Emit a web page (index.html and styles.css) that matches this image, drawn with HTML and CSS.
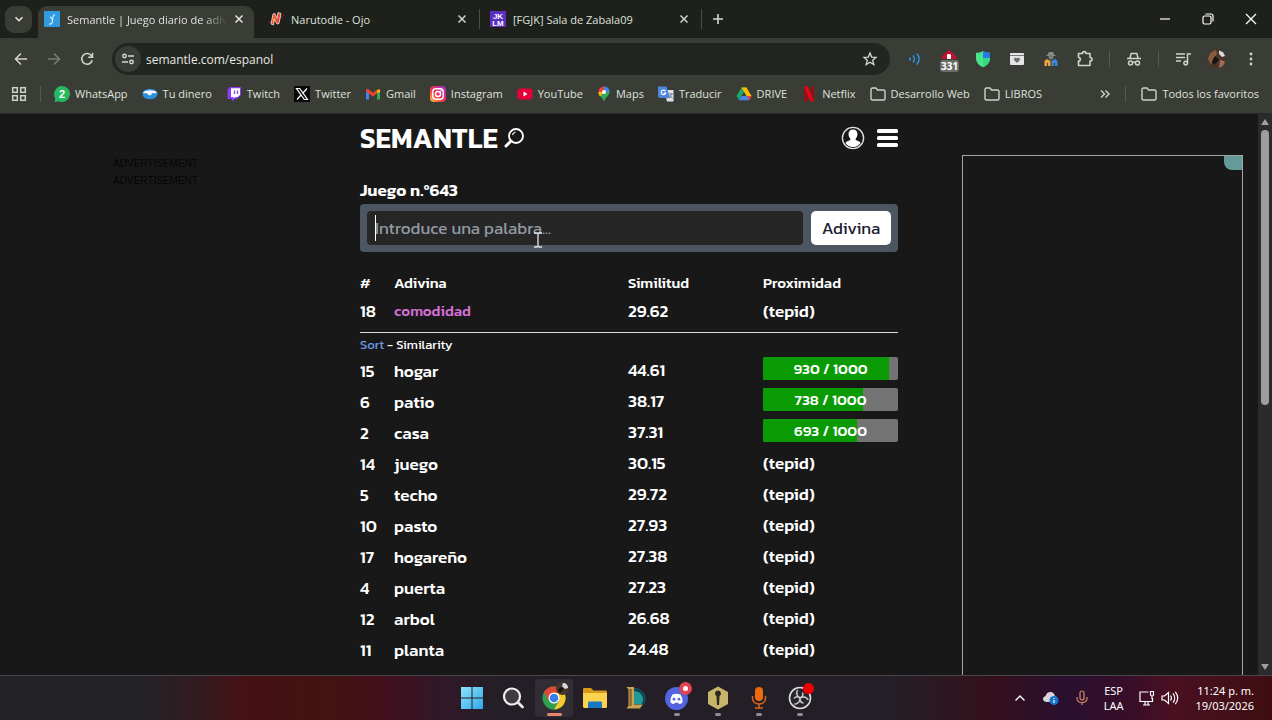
FILE: index.html
```
<!DOCTYPE html>
<html lang="es">
<head>
    <meta charset="UTF-8">
    <meta name="viewport" content="width=device-width, initial-scale=1.0">
    <title>Semantle | Juego diario de adivinanzas</title>
    <link rel="stylesheet" href="styles.css">
</head>
<body>
    <header class="browser">
        <!-- tabs -->
        <div class="tabstrip">
            <button class="tab-search" aria-label="Buscar pestañas">
                <svg width="10" height="10" viewBox="0 0 10 10"><path d="M1.5 3.2 5 6.7l3.5-3.5" fill="none" stroke="#e3e3e0" stroke-width="1.6"/></svg>
            </button>
            <div class="tab active">
                <svg width="16" height="16" viewBox="0 0 16 16"><rect width="16" height="16" fill="#2f9be0"/><path d="M5 13c3 .5 3.500-1.500 3.500-4S8.500 5 10.500 3.200M7 5.500c-.5 1.500.5 2.500 2 3" fill="none" stroke="#d9f0ff" stroke-width="1.200"/></svg>
                <span class="tab-title fade">Semantle | Juego diario de adiv</span>
                <button class="icon-btn" aria-label="Cerrar"><svg width="10" height="10" viewBox="0 0 10 10"><path d="m1.500 1.500 7 7m0-7-7 7" stroke="#e3e3e0" stroke-width="1.500"/></svg></button>
            </div>
            <div class="tab">
                <svg width="16" height="16" viewBox="0 0 16 16"><path d="M0 11c4 .5 13-3 16-7" stroke="#8e2430" fill="none"/><path d="m3 13 2-10 2-.5 2 5 1-6 3 1-2 10-2 .5-2.500-5L5.500 14z" fill="#e8452c" stroke="#fff" stroke-width=".7"/><path d="m4.500 12 1.300-7 .8-.2-1.200 7.500z" fill="#f7a13a"/></svg>
                <span class="tab-title">Narutodle - Ojo</span>
                <button class="icon-btn" aria-label="Cerrar"><svg width="10" height="10" viewBox="0 0 10 10"><path d="m1.500 1.500 7 7m0-7-7 7" stroke="#d0d2cd" stroke-width="1.500"/></svg></button>
            </div>
            <div class="tab">
                <svg width="16" height="16" viewBox="0 0 16 16"><rect width="16" height="16" fill="#5a2fc0"/><text x="8" y="7.500" class="logo-text" font-size="8" text-anchor="middle">JK</text><text x="8" y="14.500" class="logo-text" font-size="8" text-anchor="middle">LM</text></svg>
                <span class="tab-title">[FGJK] Sala de Zabala09</span>
                <button class="icon-btn" aria-label="Cerrar"><svg width="10" height="10" viewBox="0 0 10 10"><path d="m1.500 1.500 7 7m0-7-7 7" stroke="#d0d2cd" stroke-width="1.500"/></svg></button>
            </div>
            <button class="icon-btn new-tab" aria-label="Nueva pestaña"><svg width="12" height="12" viewBox="0 0 12 12"><path d="M6 1v10M1 6h10" stroke="#d6d8d3" stroke-width="1.600"/></svg></button>
            <div class="window-controls">
                <button class="icon-btn" aria-label="Minimizar"><svg width="12" height="12" viewBox="0 0 12 12"><path d="M1 6h10" stroke="#fff" stroke-width="1.200"/></svg></button>
                <button class="icon-btn" aria-label="Restaurar"><svg width="12" height="12" viewBox="0 0 12 12" fill="none" stroke="#fff" stroke-width="1.200"><rect x="1" y="3" width="8" height="8" rx="1.500"/><path d="M3.500 1H9a2 2 0 0 1 2 2v5.500"/></svg></button>
                <button class="icon-btn" aria-label="Cerrar ventana"><svg width="12" height="12" viewBox="0 0 12 12"><path d="m1 1 10 10M11 1 1 11" stroke="#fff" stroke-width="1.300"/></svg></button>
            </div>
        </div>

        <!-- address bar -->
        <div class="toolbar">
            <div class="nav">
                <button class="icon-btn" aria-label="Atrás"><svg width="16" height="16" viewBox="0 0 16 16" fill="none" stroke="#d0d3cc" stroke-width="1.600"><path d="M14 8H3M8 2.500 2.500 8 8 13.500"/></svg></button>
                <button class="icon-btn" aria-label="Adelante" disabled><svg width="16" height="16" viewBox="0 0 16 16" fill="none" stroke="#777b74" stroke-width="1.600"><path d="M2 8h11M8 2.500 13.500 8 8 13.500"/></svg></button>
                <button class="icon-btn" aria-label="Recargar"><svg width="16" height="16" viewBox="0 0 16 16" fill="none" stroke="#d0d3cc" stroke-width="1.600"><path d="M13.200 9.200A5.300 5.300 0 1 1 12 4.300l1.300 1.300M13.500 1.800v4.400H9.200"/></svg></button>
            </div>
            <div class="omnibox">
                <button class="site-info" aria-label="Información del sitio"><svg width="14" height="14" viewBox="0 0 14 14" fill="none" stroke="#d6d8d3" stroke-width="1.400"><circle cx="3.500" cy="4" r="1.700"/><path d="M7 4h6M1 10h6"/><circle cx="10.500" cy="10" r="1.700"/></svg></button>
                <input class="url" type="text" aria-label="Dirección" value="semantle.com/espanol">
                <button class="icon-btn" aria-label="Añadir a favoritos"><svg width="16" height="16" viewBox="0 0 16 16" fill="none" stroke="#d6d8d3" stroke-width="1.300"><path d="m8 2 1.700 4.100 4.300.3-3.300 2.800 1.100 4.300L8 11.200l-3.800 2.300 1.100-4.300L2 6.400l4.300-.3z"/></svg></button>
            </div>
            <div class="extensions">
                <button class="icon-btn" aria-label="Audio"><svg width="16" height="16" viewBox="0 0 16 16" fill="none" stroke="#2f8fd6" stroke-width="1.700"><path d="M2.500 6.500c.8 1 .8 2 0 3M6 4.500c1.800 2 1.800 5 0 7M9.800 2.500c3 3.300 3 7.700 0 11"/></svg></button>
                <button class="icon-btn" aria-label="Bloqueador">
                    <svg width="20" height="24" viewBox="0 0 20 24"><path d="m10 3 7 6v3H3V9z" fill="#c8102e"/><path d="M8 12V8l1-1h2l1 1v4z" fill="#fff"/></svg>
                    <span class="ext-badge">331</span>
                </button>
                <button class="icon-btn" aria-label="Escudo"><svg width="16" height="18" viewBox="0 0 16 18"><path d="M8 1c2.500 1.500 4.500 1.700 7 1.800V8c0 4.500-3 7.500-7 9.200C4 15.500 1 12.500 1 8V2.800C3.500 2.700 5.500 2.500 8 1z" fill="#48e58b"/><path d="M8 1c2.500 1.500 4.500 1.700 7 1.800V8H8z" fill="#2579e8"/><path d="M8 8h7c0 4.500-3 7.500-7 9.200z" fill="#35d884"/></svg></button>
                <button class="icon-btn" aria-label="Archivo"><svg width="16" height="16" viewBox="0 0 16 16"><rect x="1" y="2" width="14" height="12" rx="1" fill="#e6e6e6"/><path d="M1 4.500h14" stroke="#777" stroke-width="1"/><path d="M8 12 5.200 9.200V6.800h2l.8.8.8-.8h2v2.400z" fill="#6d7069"/></svg></button>
                <button class="icon-btn" aria-label="Espía"><svg width="16" height="16" viewBox="0 0 16 16"><path d="M4.500 4 6 1h4l1.500 3 2 1h-11z" fill="#8b8f8a"/><circle cx="8" cy="6" r="2.500" fill="#777d7c"/><path d="M1.500 15v-5L4 8l3.500 2v5z" fill="#f0a33a"/><path d="M8.500 15v-5L12 8l2.500 2v5z" fill="#3c87d8"/><path d="M4.500 15v-3M11.500 15v-3" stroke="#3a3d35"/></svg></button>
                <button class="icon-btn" aria-label="Extensiones"><svg width="18" height="18" viewBox="0 0 18 18" fill="none" stroke="#d0d3cc" stroke-width="1.600"><path d="M2.500 3.500h4c0-2.500 3.500-2.500 3.500 0h4v4c2.700 0 2.700 3.500 0 3.500v4.500H2.500V11c2.500 0 2.500-3.500 0-3.500z" stroke-linejoin="round"/></svg></button>
                <span class="divider"></span>
                <button class="icon-btn" aria-label="Incógnito"><svg width="16" height="16" viewBox="0 0 16 16" fill="none" stroke="#d0d3cc" stroke-width="1.500"><path d="M1 7.500h14M4 7l1.200-4.500h5.600L12 7M6.500 11.500c1-.8 2-.8 3 0"/><circle cx="4.500" cy="12" r="2"/><circle cx="11.500" cy="12" r="2"/></svg></button>
                <span class="divider"></span>
                <button class="icon-btn" aria-label="Multimedia"><svg width="16" height="16" viewBox="0 0 16 16" fill="none" stroke="#d0d3cc" stroke-width="1.500"><path d="M1 3h9M1 6.500h9M1 10h5M12.500 12V3H16"/><circle cx="10.700" cy="12" r="1.800"/></svg></button>
                <button class="icon-btn" aria-label="Perfil"><svg width="20" height="20" viewBox="0 0 20 20"><circle cx="10" cy="10" r="9.500" fill="#4a3529"/><path d="M1 10c1-5 4-8 8-9l1 4-4 5-2 6z" fill="#8a5b40"/><path d="M12 1.500c3 .5 5 2.500 6 5.500l-3 1-3-3z" fill="#d8dbe0"/><path d="m8 7 4 4-5 5-2-3z" fill="#15120f"/><path d="M13 11c2 0 4 1 5 2-1 3-3 5-6 6z" fill="#a36c55"/></svg></button>
                <button class="icon-btn" aria-label="Menú"><svg width="16" height="16" viewBox="0 0 16 16" fill="#d0d3cc"><circle cx="8" cy="3" r="1.400"/><circle cx="8" cy="8" r="1.400"/><circle cx="8" cy="13" r="1.400"/></svg></button>
            </div>
        </div>

        <!-- bookmarks -->
        <nav class="bookmarks">
            <button class="icon-btn" aria-label="Grupos de pestañas"><svg width="16" height="16" viewBox="0 0 16 16" fill="none" stroke="#cfd2cb" stroke-width="1.500"><rect x="1.700" y="1.700" width="4.600" height="4.600"/><rect x="9.700" y="1.700" width="4.600" height="4.600"/><rect x="1.700" y="9.700" width="4.600" height="4.600"/><rect x="9.700" y="9.700" width="4.600" height="4.600"/></svg></button>
            <span class="divider"></span>
            <a href="#"><svg width="16" height="16" viewBox="0 0 16 16"><path d="M8 0a8 8 0 1 1-3.500 15.200L.5 16l.9-3.600A8 8 0 0 1 8 0z" fill="#25b860"/><text x="8" y="12" class="logo-text" font-size="11" text-anchor="middle">2</text></svg>WhatsApp</a>
            <a href="#"><svg width="16" height="16" viewBox="0 0 16 16"><ellipse cx="8" cy="8" rx="7.600" ry="5.200" fill="#2a8fe0"/><path d="M1 6.500C3 3.500 13 3.500 15 6.500c-2 1-3 1-4.500.5C9.500 8.500 8.500 9.500 8 9.500S5 8 4.500 7C3.500 7.500 2 7.500 1 6.500z" fill="#f3f7fb"/></svg>Tu dinero</a>
            <a href="#"><svg width="16" height="16" viewBox="0 0 16 16"><path d="M4 1h11v8l-4 4H8.500L6 15.500V13H1.500V3.500z" fill="#8a3df0"/><path d="M5 2.200h9v6.500L11.700 11H9.200L7.500 12.700V11H5z" fill="#fff"/><path d="M8.500 4.500v3.500M11.500 4.500v3.500" stroke="#8a3df0" stroke-width="1.300"/></svg>Twitch</a>
            <a href="#"><svg width="16" height="16" viewBox="0 0 16 16"><rect width="16" height="16" fill="#090909"/><path d="M2.500 2.500h3.200l7.800 11h-3.200z" fill="none" stroke="#fff" stroke-width="1.200"/><path d="m13 2.500-4.500 5M7 9l-4 4.500" stroke="#fff" stroke-width="1.200"/></svg>Twitter</a>
            <a href="#"><svg width="16" height="16" viewBox="0 0 16 16"><path d="M1 3.500v10h3V6z" fill="#4285f4"/><path d="M15 3.500v10h-3V6z" fill="#34a853"/><path d="M12 6.500V4.300c2-1.800 3-.8 3 .2v2z" fill="#fbbc04"/><path d="M1 4.500c0-2 1.500-2 2.500-1.200L8 6.700l4-3v3.700l-4 3-7-5z" fill="#ea4335"/></svg>Gmail</a>
            <a href="#"><svg width="16" height="16" viewBox="0 0 16 16"><defs><linearGradient id="ig" x1="0" y1="1" x2="1" y2="0"><stop offset="0" stop-color="#ffc83c"/><stop offset=".45" stop-color="#f5304e"/><stop offset="1" stop-color="#9632d8"/></linearGradient></defs><rect width="16" height="16" rx="4" fill="url(#ig)"/><g fill="none" stroke="#fff" stroke-width="1.400"><rect x="2.800" y="2.800" width="10.400" height="10.400" rx="3"/><circle cx="8" cy="8" r="2.500"/></g><circle cx="11" cy="5" r=".8" fill="#fff"/></svg>Instagram</a>
            <a href="#"><svg width="16" height="16" viewBox="0 0 16 16"><rect x=".5" y="2.500" width="15" height="11" rx="3" fill="#e6003a"/><path d="m6.500 5.500 4 2.500-4 2.500z" fill="#fff"/></svg>YouTube</a>
            <a href="#"><svg width="14" height="16" viewBox="0 0 14 16"><path d="M7 .5a5.500 5.500 0 0 1 5.500 5.500c0 4-4 5-5.500 9.700C5.500 11 1.500 10 1.500 6z" fill="#34a853"/><path d="M1.500 6A5.500 5.500 0 0 1 7 .5V6l-4 4z" fill="#ea4335"/><path d="M7 .5A5.500 5.500 0 0 1 12.500 6H7z" fill="#4285f4"/><path d="M1.500 6 7 6l-4 4.500C2 9 1.500 7.500 1.500 6z" fill="#fbbc04"/><circle cx="7" cy="6" r="2" fill="#fff"/></svg>Maps</a>
            <a href="#"><svg width="16" height="16" viewBox="0 0 16 16"><path d="M6 4h9.500v11.500H9z" fill="#dfe3e8"/><path d="M0 .5h8.500L12 12H1.500L0 10.500z" fill="#4a86e0"/><path d="M7.500 5.200A2.300 2.300 0 1 0 7.700 7H5.500" fill="none" stroke="#fff" stroke-width="1.200"/><path d="M11 8h4M13 7v1.500c0 2-1 3-2 4M12 9.500l2.500 3" stroke="#718096" fill="none"/></svg>Traducir</a>
            <a href="#"><svg width="16" height="16" viewBox="0 0 16 16"><path d="M5.500 1.500h5L8 6 3.200 14.300.5 10z" fill="#22a565"/><path d="M5.500 1.500h5L15.500 10h-5z" fill="#fbbc04"/><path d="M5.700 10h9.800L13 14.300H3.200z" fill="#4285f4"/><path d="M10.500 10h5L13 14.300z" fill="#ea4335"/></svg>DRIVE</a>
            <a href="#"><svg width="16" height="16" viewBox="0 0 16 16"><path d="M3 .5h3.500v15H3zM9.500 .5H13v15H9.500z" fill="#9c0a12"/><path d="M3 .5h3.500l6.500 15H9.500z" fill="#e50914"/></svg>Netflix</a>
            <a href="#"><svg class="folder" viewBox="0 0 16 14"><path d="M1 2.500c0-.8.5-1.500 1.500-1.500H6l1.500 2h6c1 0 1.500.6 1.500 1.500v7c0 .9-.5 1.500-1.500 1.500h-11C1.500 13 1 12.400 1 11.500z"/></svg>Desarrollo Web</a>
            <a href="#"><svg class="folder" viewBox="0 0 16 14"><path d="M1 2.500c0-.8.5-1.500 1.500-1.500H6l1.500 2h6c1 0 1.500.6 1.500 1.500v7c0 .9-.5 1.500-1.500 1.500h-11C1.500 13 1 12.400 1 11.500z"/></svg>LIBROS</a>
            <div class="bookmarks-end">
                <button class="icon-btn" aria-label="Más favoritos"><svg width="10" height="10" viewBox="0 0 10 10"><path d="m1 1.500 3.500 3.500L1 8.500M5.500 1.500 9 5 5.500 8.500" fill="none" stroke="#d0d3cc" stroke-width="1.400"/></svg></button>
                <span class="divider"></span>
                <a href="#"><svg class="folder" viewBox="0 0 16 14"><path d="M1 2.500c0-.8.5-1.500 1.500-1.500H6l1.500 2h6c1 0 1.500.6 1.500 1.500v7c0 .9-.5 1.500-1.500 1.500h-11C1.500 13 1 12.400 1 11.500z"/></svg>Todos los favoritos</a>
            </div>
        </nav>
    </header>

    <div class="viewport">
        <aside class="side side-left">
            <span>ADVERTISEMENT</span>
            <span>ADVERTISEMENT</span>
        </aside>

        <main class="game">
            <div class="game-header">
                <h1>SEMANTLE</h1>
                <svg width="20" height="20" viewBox="0 0 20 20" fill="none" stroke="#fff"><circle cx="12" cy="8" r="7" stroke-width="1.800"/><path d="M8.500 7a4 4 0 0 1 3-3" stroke-width="1.200"/><path d="m7 13-5 5" stroke-width="3" stroke-linecap="round"/></svg>
                <div class="game-actions">
                    <button class="icon-btn" aria-label="Cuenta"><svg width="24" height="24" viewBox="0 0 24 24"><circle cx="12" cy="12" r="10.600" fill="none" stroke="#ddd" stroke-width="1.400"/><path d="M12 3.500c2.800 0 4.500 1.800 4.500 4.500 0 2.200-1 3.700-1.800 4.700v1.300l3.500 1.500c.8.400 1.200 1 1.300 1.600A9 9 0 0 1 12 21a9 9 0 0 1-7.500-3.900c.1-.6.500-1.200 1.300-1.600l3.500-1.500v-1.300c-.8-1-1.800-2.500-1.800-4.700 0-2.700 1.700-4.500 4.500-4.500z" fill="#fff"/></svg></button>
                    <button class="icon-btn" aria-label="Menú del juego"><svg width="22" height="20" viewBox="0 0 22 20" fill="#fff"><rect x="1" y="1" width="21" height="4" rx="1.500"/><rect x="1" y="8" width="21" height="4" rx="1.500"/><rect x="1" y="15" width="21" height="4" rx="1.500"/></svg></button>
                </div>
            </div>

            <form class="guess-form">
                <label for="guess">Juego n.º643</label>
                <div class="guess-box">
                    <div class="guess-field">
                        <input type="text" id="guess" placeholder="Introduce una palabra...">
                        <span class="caret"></span>
                        <svg class="pointer" width="10" height="16" viewBox="0 0 10 16"><path d="M1 1h3l1 1 1-1h3M1 15h3l1-1 1 1h3M5 2v12" fill="none" stroke="#e4e4e4" stroke-width="1.300"/></svg>
                    </div>
                    <button type="button" class="guess-btn">Adivina</button>
                </div>
            </form>

            <table class="guesses">
                <colgroup><col class="col-num"><col class="col-word"><col class="col-sim"><col class="col-prox"></colgroup>
                <thead>
                    <tr><th>#</th><th>Adivina</th><th>Similitud</th><th>Proximidad</th></tr>
                </thead>
                <tbody class="latest">
                    <tr><td>18</td><td class="word">comodidad</td><td>29.62</td><td>(tepid)</td></tr>
                </tbody>
                <tbody class="sorted">
                    <tr class="sort"><td colspan="4"><a href="#">Sort</a> - Similarity</td></tr>
                    <tr><td>15</td><td>hogar</td><td class="up">44.61</td><td class="near"><div class="bar"><div class="bar-fill" style="width: 93%"></div><span>930 / 1000</span></div></td></tr>
                    <tr><td>6</td><td>patio</td><td class="up">38.17</td><td class="near"><div class="bar"><div class="bar-fill" style="width: 73.8%"></div><span>738 / 1000</span></div></td></tr>
                    <tr><td>2</td><td>casa</td><td class="up">37.31</td><td class="near"><div class="bar"><div class="bar-fill" style="width: 69.3%"></div><span>693 / 1000</span></div></td></tr>
                    <tr><td>14</td><td>juego</td><td class="up">30.15</td><td class="up">(tepid)</td></tr>
                    <tr><td>5</td><td>techo</td><td class="up">29.72</td><td class="up">(tepid)</td></tr>
                    <tr><td>10</td><td>pasto</td><td class="up">27.93</td><td class="up">(tepid)</td></tr>
                    <tr><td>17</td><td>hogareño</td><td class="up">27.38</td><td class="up">(tepid)</td></tr>
                    <tr><td>4</td><td>puerta</td><td class="up">27.23</td><td class="up">(tepid)</td></tr>
                    <tr><td>12</td><td>arbol</td><td class="up">26.68</td><td class="up">(tepid)</td></tr>
                    <tr><td>11</td><td>planta</td><td class="up">24.48</td><td class="up">(tepid)</td></tr>
                    <tr><td>9</td><td>olla</td><td class="up">23.93</td><td class="up">(tepid)</td></tr>
                </tbody>
            </table>
        </main>

        <aside class="side side-right">
            <div class="ad-frame"><span class="ad-choices"></span></div>
        </aside>

        <div class="scrollbar">
            <svg width="10" height="8" viewBox="0 0 10 8"><path d="M5 1 9 7H1z" fill="#a09fa0"/></svg>
            <div class="scroll-track"><div class="scroll-thumb"></div></div>
            <svg width="10" height="8" viewBox="0 0 10 8"><path d="M1 1h8L5 7z" fill="#a09fa0"/></svg>
        </div>
    </div>

    <footer class="taskbar">
        <div class="apps">
            <button class="app" aria-label="Inicio"><svg width="24" height="24" viewBox="0 0 24 24"><defs><linearGradient id="win" x1="0" y1="0" x2="1" y2="1"><stop offset="0" stop-color="#8fe2fb"/><stop offset="1" stop-color="#2fa8e8"/></linearGradient></defs><path d="M1 1h10.500v10.500H1zM12.500 1H23v10.500H12.500zM1 12.500h10.500V23H1zM12.500 12.500H23V23H12.500z" fill="url(#win)"/></svg></button>
            <button class="app" aria-label="Buscar"><svg width="24" height="24" viewBox="0 0 24 24"><circle cx="11" cy="10.500" r="8" fill="#3e3c42" stroke="#f0f0f0" stroke-width="2.200"/><path d="m17 16.500 4.500 4.500" stroke="#e8e8e8" stroke-width="2.800" stroke-linecap="round"/></svg></button>
            <button class="app current" aria-label="Chrome">
                <svg width="24" height="24" viewBox="0 0 24 24"><circle cx="12" cy="12" r="11.500" fill="#2f9e4f"/><path d="M12 6.500h10.200A11.500 11.500 0 0 1 12 23.500l5-8.500z" fill="#f7c92f"/><path d="M2 6.300A11.500 11.500 0 0 1 22 6.300l.2.700H12l-5 8z" fill="#e0483a"/><circle cx="12" cy="12" r="5.500" fill="#fff"/><circle cx="12" cy="12" r="4.300" fill="#3b7de8"/></svg>
                <svg class="app-badge" width="13" height="13" viewBox="0 0 13 13"><circle cx="6.500" cy="6.500" r="6.500" fill="#46362c"/><path d="M7 1c3 0 5 2 5 5L9 7 6 4z" fill="#d5d8dc"/><path d="m5 5 3 2-4 4-2-3z" fill="#15120f"/></svg>
            </button>
            <button class="app" aria-label="Explorador"><svg width="24" height="24" viewBox="0 0 24 24"><path d="M0 3.500C0 2.500.5 2 1.500 2H8l2.500 2.500h12c1 0 1.500.5 1.500 1.500v3H0z" fill="#d99a1c"/><path d="M0 7h24v13.500c0 .8-.5 1.500-1.500 1.500h-21C.5 22 0 21.300 0 20.500z" fill="#fbd34e"/><path d="M5 22v-5c0-1 .7-1.500 1.500-1.500h11c.8 0 1.500.5 1.500 1.500v5z" fill="#1b76c4"/></svg></button>
            <button class="app" aria-label="League of Legends"><svg width="24" height="24" viewBox="0 0 24 24"><path d="M8 2.500h3a10 10 0 0 1 10 10c0 3-1 5.500-3 7.500H8z" fill="#0b3f49" stroke="#16626a"/><path d="M10 5c5.500 0 9 4 9 8 0 2-.5 3.500-1.500 5H10z" fill="#1f9a98"/><path d="M2.500 1H10v17.500h8.500L16 22.500H2.500l2-2.500V3.500z" fill="#c9a455"/><path d="M5.500 3h2.200v17H5.500z" fill="#8b6428"/></svg></button>
            <button class="app running" aria-label="Discord">
                <svg width="24" height="24" viewBox="0 0 24 24"><circle cx="11.500" cy="12.500" r="11.500" fill="#5463df"/><path d="M7.500 8.500c2.500-1 5.500-1 8 0 1.500 2.500 2.300 5 2 8-1.200 1-2.300 1.500-3.500 1.500l-.8-1.300c-1 .2-2.400.2-3.400 0L9 18c-1.200 0-2.300-.5-3.500-1.500-.3-3 .5-5.500 2-8z" fill="#fff"/><circle cx="9" cy="13.200" r="1.400" fill="#5463df"/><circle cx="14" cy="13.200" r="1.400" fill="#5463df"/></svg>
                <svg class="app-badge" width="13" height="13" viewBox="0 0 13 13"><circle cx="6.500" cy="6.500" r="6.500" fill="#e04450"/><circle cx="6.500" cy="6.500" r="2.500" fill="#fff"/></svg>
            </button>
            <button class="app running" aria-label="Llave"><svg width="24" height="24" viewBox="0 0 24 24"><path d="M12 .5 22 6v12l-10 5.500L2 18V6z" fill="#c9b46c"/><path d="M12 4.500a3 3 0 0 1 1.500 5.600L13 19h-2l-.5-8.900A3 3 0 0 1 12 4.500z" fill="#2c2a20"/></svg></button>
            <button class="app running" aria-label="Micrófono"><svg width="24" height="24" viewBox="0 0 24 24"><rect x="8" y="1" width="8" height="14" rx="4" fill="#ee6a10"/><path d="M5.500 10v2c0 4 3 6 6.500 6s6.500-2 6.500-6v-2M12 18v4M8 22h8" fill="none" stroke="#d9621a" stroke-width="1.600"/></svg></button>
            <button class="app running" aria-label="OBS">
                <svg width="24" height="24" viewBox="0 0 24 24" fill="none"><circle cx="12" cy="12" r="10.500" fill="#26252a" stroke="#dcdcdc" stroke-width="1.600"/><g stroke="#c9c9c9" stroke-width="1.500"><path id="blade" d="M9.500 4c-1.800 3.500-.5 6.500 2.500 8 2.500-1 3.500-3 2.500-5.500"/><use href="#blade" transform="rotate(120 12 12)"/><use href="#blade" transform="rotate(240 12 12)"/></g></svg>
                <svg class="app-badge" width="13" height="13" viewBox="0 0 13 13"><circle cx="6.500" cy="6.500" r="5.500" fill="#f00000"/></svg>
            </button>
        </div>
        <div class="tray">
            <button class="icon-btn" aria-label="Iconos ocultos"><svg width="12" height="12" viewBox="0 0 12 12"><path d="m1.500 8.500 4.500-4.500 4.500 4.500" fill="none" stroke="#fff" stroke-width="1.400"/></svg></button>
            <svg width="18" height="16" viewBox="0 0 18 16"><path d="M5 12C2 12 1 10.500 1 9s1-2.600 2.500-2.800C4 3.500 6 2 8.500 2S12.500 4 13 6c1.500.5 2.500 1.500 2.500 3s-1 3-3 3z" fill="#d9d3dc"/><circle cx="12" cy="10.500" r="4.500" fill="#1673cc"/><path d="M12 8v1M12 10v3" stroke="#fff" stroke-width="1.200"/></svg>
            <svg width="12" height="16" viewBox="0 0 12 16" fill="none" stroke="#d58a68" stroke-width="1.200"><rect x="4" y="1" width="4" height="9" rx="2"/><path d="M1 7v1c0 3 2 4.500 5 4.500S11 11 11 8V7M6 12.500V15"/></svg>
            <span class="lang">ESP<br>LAA</span>
            <div class="status">
                <svg width="16" height="16" viewBox="0 0 16 16" fill="none" stroke="#fff" stroke-width="1.200"><path d="M9.500 2H1v9.500h12.500V8M4 15h7M6 11.500V15M9 11.500V15M13 5.500V9M11.500 1.500h3v3a1.500 1.500 0 0 1-3 0z"/></svg>
                <svg width="18" height="16" viewBox="0 0 18 16" fill="none" stroke="#fff" stroke-width="1.200"><path d="M1 6v4h2.500L7.500 13.500v-11L3.500 6zM9.500 5.500c1.200 1.500 1.200 3.500 0 5M12 3.500c2.200 2.600 2.200 6.400 0 9M14.300 1.800c3.200 3.700 3.200 8.700 0 12.400"/></svg>
            </div>
            <time class="clock">11:24 p. m.<br>19/03/2026</time>
        </div>
    </footer>
</body>
</html>
```
FILE: styles.css
```
* {
    box-sizing: border-box;
    margin: 0;
    padding: 0;
}

body {
    display: flex;
    flex-direction: column;
    height: 100vh;
    overflow: hidden;
    background: #181818;
    color: #fff;
    font-family: "Segoe UI", "Noto Sans", sans-serif;
    font-size: 12px;
}

svg {
    display: block;
    flex: none;
}

button {
    border: none;
    background: none;
    color: inherit;
    font-family: inherit;
}

a {
    color: inherit;
    text-decoration: none;
}

.icon-btn {
    position: relative;
    display: flex;
    align-items: center;
    justify-content: center;
}

.logo-text {
    font-family: "Liberation Sans", sans-serif;
    font-weight: bold;
    fill: #fff;
}

/* browser */
.browser {
    background: #3a3d36;
    color: #dfe1dc;
    font-family: "Segoe UI", "Open Sans", sans-serif;
    font-size: 11px;
}

.tabstrip {
    display: flex;
    align-items: center;
    height: 38px;
    padding-left: 5px;
    background: #1d201b;
}

.tab-search {
    display: flex;
    align-items: center;
    justify-content: center;
    width: 27px;
    height: 27px;
    margin-right: 6px;
    border-radius: 9px;
    background: #3a3d36;
}

.tab {
    display: flex;
    align-items: center;
    gap: 7px;
    width: 222px;
    height: 20px;
    padding: 0 12px 0 10px;
    border-right: 1px solid #4b4e47;
}

.tab.active {
    width: 216px;
    height: 32px;
    margin: 6px 4px 0 0;
    padding: 0 10px 6px 6px;
    border: none;
    border-radius: 9px 9px 0 0;
    background: #3a3d36;
}

.tab-title {
    flex: 1;
    white-space: nowrap;
}

.fade {
    -webkit-mask-image: linear-gradient(to right, #000 85%, transparent);
    mask-image: linear-gradient(to right, #000 85%, transparent);
}

.new-tab {
    margin-left: 10px;
}

.window-controls {
    display: flex;
    gap: 31px;
    margin-left: auto;
    padding-right: 15px;
}

.toolbar {
    display: flex;
    align-items: center;
    height: 42px;
    padding-right: 12px;
}

.nav {
    display: flex;
    gap: 17px;
    padding: 0 17px 0 13px;
}

.omnibox {
    display: flex;
    flex: 1;
    align-items: center;
    height: 32px;
    padding: 0 12px 0 3px;
    border-radius: 16px;
    background: #232620;
}

.site-info {
    display: flex;
    align-items: center;
    justify-content: center;
    width: 26px;
    height: 26px;
    border-radius: 13px;
    background: #3a3d36;
}

.url {
    flex: 1;
    height: 26px;
    padding: 0 5px;
    border: none;
    outline: none;
    background: none;
    color: #e6e8e3;
    font-family: inherit;
    font-size: 12px;
}

.extensions {
    display: flex;
    align-items: center;
    gap: 16px;
    padding-left: 16px;
}

.extensions .icon-btn {
    width: 18px;
}

.extensions .divider {
    margin: 0 -1px;
}

.ext-badge {
    position: absolute;
    left: 0;
    bottom: -1px;
    padding: 0 1px;
    border-radius: 3px;
    background: #6b6e68;
    color: #fff;
    font-size: 10px;
    font-weight: 700;
    line-height: 12px;
}

.divider {
    width: 1px;
    height: 16px;
    background: #555950;
}

.bookmarks {
    display: flex;
    align-items: center;
    gap: 14px;
    height: 34px;
    padding: 0 13px 6px 11px;
    border-bottom: 1px solid #2a2a2a;
}

.bookmarks > .divider {
    margin: 0 -1px;
}

.bookmarks a {
    display: flex;
    align-items: center;
    gap: 5px;
    white-space: nowrap;
}

.bookmarks-end {
    display: flex;
    align-items: center;
    gap: 15px;
    margin-left: auto;
}

.folder {
    width: 16px;
    height: 14px;
    fill: none;
    stroke: #cfd2cb;
    stroke-width: 1.4;
}

/* game page */
.viewport {
    display: flex;
    flex: 1;
    min-height: 0;
    overflow: hidden;
    font-family: Kanit, "Noto Sans", sans-serif;
}

.side {
    flex: 1;
    padding-top: 41px;
}

.side-left {
    display: flex;
    flex-direction: column;
    align-items: center;
    color: #050505;
    font-family: "Liberation Sans", sans-serif;
    font-size: 10px;
    line-height: 17px;
}

.side-right {
    display: flex;
    justify-content: center;
}

.ad-frame {
    position: relative;
    width: 281px;
    border: 1px solid #a5a5a5;
    border-bottom: none;
}

.ad-choices {
    position: absolute;
    top: 0;
    right: 0;
    width: 18px;
    height: 14px;
    border-radius: 0 0 0 8px;
    background: #649a98;
}

.game {
    flex: 0 1 636px;
    padding: 0 49px;
}

.game-header {
    display: flex;
    align-items: center;
    gap: 6px;
    height: 48px;
}

h1 {
    font-size: 28px;
    font-weight: 600;
    line-height: 32px;
}

.game-actions {
    display: flex;
    align-items: center;
    gap: 11px;
    margin-left: auto;
}

.guess-form label {
    display: block;
    margin: 16px 0 2px;
    font-size: 17px;
    font-weight: 600;
    line-height: 24px;
}

.guess-box {
    display: flex;
    gap: 8px;
    padding: 7px;
    border-radius: 4px;
    background: #4b5660;
}

.guess-field {
    position: relative;
    flex: 1;
}

.guess-field input {
    width: 100%;
    height: 34px;
    padding: 0 8px;
    border: none;
    border-radius: 4px;
    outline: none;
    background: #262626;
    color: #fff;
    font-family: inherit;
    font-size: 17px;
}

.guess-field input::placeholder {
    color: #9199a4;
    opacity: 1;
}

.caret {
    position: absolute;
    top: 4px;
    left: 8px;
    width: 1px;
    height: 26px;
    background: #fff;
}

.pointer {
    position: absolute;
    top: 21px;
    left: 166px;
}

.guess-btn {
    width: 80px;
    height: 34px;
    border-radius: 5px;
    background: #fff;
    color: #1c2030;
    font-size: 17px;
}

.guesses {
    width: 100%;
    margin-top: 16px;
    border-collapse: collapse;
    table-layout: fixed;
    font-size: 17px;
    font-weight: 500;
    text-align: left;
}

.col-num {
    width: 34px;
}

.col-sim,
.col-prox {
    width: 135px;
}

.guesses th {
    height: 28px;
    font-size: 15px;
    font-weight: 500;
}

.guesses td {
    height: 31px;
    line-height: 24px;
}

.guesses .up {
    padding-bottom: 2px;
}

.guesses .near {
    padding-top: 1px;
    font-size: 15px;
    vertical-align: top;
}

.latest td {
    height: 36px;
    padding-bottom: 6px;
    border-bottom: 1px solid #ddd;
}

.latest .word {
    color: #d670d6;
    font-size: 15px;
}

.guesses .sort td {
    height: 23px;
    font-size: 13px;
    font-weight: 400;
    line-height: 23px;
}

.sort a {
    color: #6b98e0;
}

.bar {
    position: relative;
    height: 23px;
    border-radius: 2px;
    overflow: hidden;
    background: #737373;
    line-height: 23px;
    text-align: center;
}

.bar-fill {
    height: 100%;
    background: #0a9a04;
}

.bar span {
    position: absolute;
    inset: 0;
}

.scrollbar {
    display: flex;
    flex-direction: column;
    align-items: center;
    gap: 4px;
    width: 14px;
    padding: 4px 0;
    background: #2b2b2c;
}

.scroll-track {
    flex: 1;
}

.scroll-thumb {
    width: 8px;
    height: 52%;
    border-radius: 4px;
    background: #9f9e9f;
}

/* taskbar */
.taskbar {
    display: grid;
    grid-template-columns: 1fr auto 1fr;
    align-items: center;
    height: 45px;
    border-top: 1px solid #4a474c;
    background: linear-gradient(to right, #232227 0, #232227 11%, #341a1f 16%, #461015 19%, #42130f 26%, #430f1d 30%, #301828 35%, #241f26 39%, #241f26 70%, #35101c 78%, #2a0f30 84%, #380e28 89%, #4a1022 92%, #3e0e12 100%);
}

.apps {
    display: flex;
    grid-column: 2;
    gap: 3px;
}

.app {
    position: relative;
    display: flex;
    align-items: center;
    justify-content: center;
    width: 38px;
    height: 38px;
    border-radius: 4px;
}

.current {
    background: #312d34;
}

.current::after,
.running::after {
    content: "";
    position: absolute;
    bottom: 1px;
    left: 50%;
    width: 6px;
    height: 3px;
    margin-left: -3px;
    border-radius: 2px;
    background: #8f8d92;
}

.current::after {
    width: 15px;
    margin-left: -7px;
    background: #e8846c;
}

.app-badge {
    position: absolute;
    top: 3px;
    right: 4px;
}

.tray {
    display: flex;
    align-items: center;
    justify-content: flex-end;
    gap: 16px;
    padding-right: 18px;
    font-size: 11px;
    line-height: 15px;
}

.lang {
    text-align: center;
}

.status {
    display: flex;
    gap: 6px;
}

.clock {
    text-align: right;
}
```
